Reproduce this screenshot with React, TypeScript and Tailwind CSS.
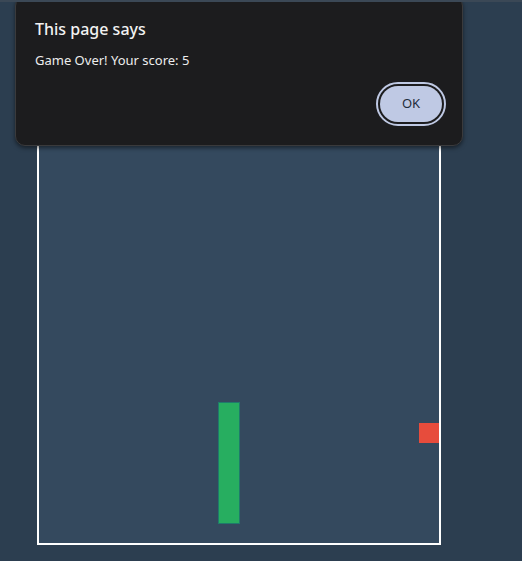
import React from 'react';

export default function App() {
  return (
    <div
      className="relative h-[561px] w-[522px] overflow-hidden bg-[#2c3e50] border-t-2 border-[#3b4856]"
      style={{ fontFamily: '"Noto Sans", "Open Sans", sans-serif' }}
    >
      {/* game board */}
      <div className="pl-[37px] pt-[39px]">
        <div className="relative h-[504px] w-[404px] border-2 border-white bg-[#34495e]">
          {/* paddle */}
          <div className="absolute left-[179px] top-[359px] h-[122px] w-[22px] border border-[#1f7a6b] bg-[#27ae60]" />
          {/* ball */}
          <div className="absolute left-[380px] top-[380px] h-[20px] w-[20px] bg-[#e74c3c]" />
        </div>
      </div>

      {/* alert dialog */}
      <div className="absolute left-[15px] top-[-6px] flex h-[150px] w-[448px] flex-col rounded-[10px] border border-[#3a3a3c] bg-[#1c1c1e] shadow-[0_2px_4px_rgba(0,0,0,0.5)]">
        <div className="pl-[19px] pt-[21px] text-[16px] font-medium leading-[22px] text-[#f2f2f2]">
          This page says
        </div>
        <div className="pl-[19px] pt-[11px] text-[13px] leading-[18px] text-[#ededed]">
          Game Over! Your score: 5
        </div>
        <div className="flex flex-1 items-start justify-end pr-[16px] pt-[13px]">
          <div className="rounded-full border-2 border-[#bfc9e4] p-[2px] bg-[#1c1c1e]">
            <button className="flex h-[36px] w-[62px] items-center justify-center rounded-full bg-[#bfc9e4] text-[13px] text-[#1f2d3d]">
              OK
            </button>
          </div>
        </div>
      </div>
    </div>
  );
}
